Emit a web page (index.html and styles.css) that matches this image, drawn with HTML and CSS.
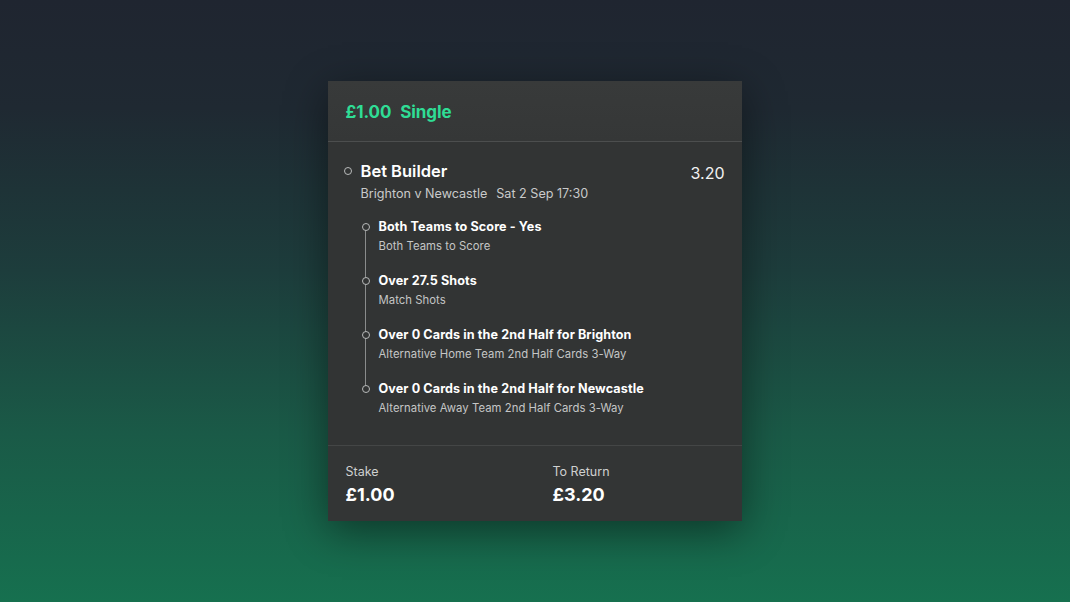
FILE: index.html
```html
<!DOCTYPE html>
<html>
<head>
<meta charset="utf-8">
<link rel="stylesheet" href="styles.css">
</head>
<body>
<div class="stage">
  <div class="card">
    <div class="header"><span class="amt">£1.00</span><span class="type">Single</span></div>
    <div class="body">
      <div class="bb">
        <div class="bb-top">
          <span class="dot"></span>
          <span class="bb-title">Bet Builder</span>
          <span class="odds">3.20</span>
        </div>
        <div class="match">Brighton v Newcastle<span class="date">Sat 2 Sep 17:30</span></div>
      </div>
      <div class="legs">
        <div class="leg">
          <span class="ldot"></span>
          <div class="lt">Both Teams to Score - Yes</div>
          <div class="ls">Both Teams to Score</div>
        </div>
        <div class="leg">
          <span class="ldot"></span>
          <div class="lt">Over 27.5 Shots</div>
          <div class="ls">Match Shots</div>
        </div>
        <div class="leg">
          <span class="ldot"></span>
          <div class="lt">Over 0 Cards in the 2nd Half for Brighton</div>
          <div class="ls">Alternative Home Team 2nd Half Cards 3-Way</div>
        </div>
        <div class="leg last">
          <span class="ldot"></span>
          <div class="lt">Over 0 Cards in the 2nd Half for Newcastle</div>
          <div class="ls">Alternative Away Team 2nd Half Cards 3-Way</div>
        </div>
      </div>
    </div>
    <div class="footer">
      <div class="col first">
        <div class="flabel">Stake</div>
        <div class="fval">£1.00</div>
      </div>
      <div class="col">
        <div class="flabel">To Return</div>
        <div class="fval">£3.20</div>
      </div>
    </div>
  </div>
</div>
</body>
</html>
```
FILE: styles.css
```css
* { box-sizing: border-box; }
html, body { margin: 0; padding: 0; }
body {
  width: 1070px;
  height: 602px;
  overflow: hidden;
  font-family: "Inter", "Liberation Sans", sans-serif;
  background: linear-gradient(180deg, #1f2530 0%, #1f2932 18%, #1d3d3c 45%, #1a5a47 72%, #16704f 100%);
  color: #fff;
}
.stage {
  height: 602px;
  display: flex;
  justify-content: center;
  padding-top: 81px;
  padding-right: 1px;
}
.card {
  width: 414px;
  height: 440px;
  background: #323434;
  box-shadow: 0 10px 40px rgba(0, 0, 0, 0.45);
  display: flex;
  flex-direction: column;
}
.header {
  height: 61px;
  background: linear-gradient(180deg, #383a3a, #353737);
  border-bottom: 1px solid #4c4e4e;
  display: flex;
  align-items: center;
  padding: 2px 17px 0 18px;
  gap: 9px;
  color: #2fdd95;
  font-size: 17px;
  font-weight: 700;
  letter-spacing: -0.1px;
}
.body {
  flex: 1;
  padding: 18px 17px 0 18px;
  border-bottom: 1px solid #444646;
  background: #323434;
}
.bb-top {
  display: flex;
  align-items: center;
  height: 22px;
}
.dot {
  width: 8px;
  height: 8px;
  border: 1.5px solid #b8baba;
  border-radius: 50%;
  margin-right: 9px;
  margin-left: -2px;
}
.bb-title {
  font-size: 16.5px;
  font-weight: 600;
  color: #fff;
  flex: 1;
}
.odds {
  font-size: 16px;
  font-weight: 400;
  margin-top: 3px;
  color: #f2f2f2;
}
.match {
  font-size: 12.6px;
  color: #c9caca;
  margin-left: 15px;
  margin-top: 4px;
}
.date { margin-left: 9px; }
.legs {
  margin-top: 17px;
  margin-left: 15px;
  padding-left: 18px;
  position: relative;
}
.leg {
  position: relative;
  height: 54px;
}
.leg::before {
  content: "";
  position: absolute;
  left: -13.5px;
  top: 9px;
  width: 1px;
  height: 54px;
  background: #8a8c8c;
}
.leg.last::before { display: none; }
.ldot {
  position: absolute;
  left: -17px;
  top: 5px;
  width: 8px;
  height: 8px;
  border: 1.5px solid #b8baba;
  border-radius: 50%;
  background: #323434;
  z-index: 1;
}
.lt {
  font-size: 12.6px;
  font-weight: 700;
  color: #fff;
  line-height: 18px;
  letter-spacing: 0.1px;
}
.ls {
  font-size: 11.3px;
  color: #c5c6c6;
  margin-top: 3px;
  letter-spacing: 0.05px;
}
.footer {
  height: 75px;
  display: flex;
  padding: 18px 17px 0 18px;
  background: #333535;
}
.col { flex: 1; }
.col.first { flex: 0 0 207px; }
.flabel {
  font-size: 12.5px;
  color: #cfd0d0;
}
.fval {
  font-size: 18px;
  font-weight: 700;
  color: #fff;
  margin-top: 5px;
}
```
